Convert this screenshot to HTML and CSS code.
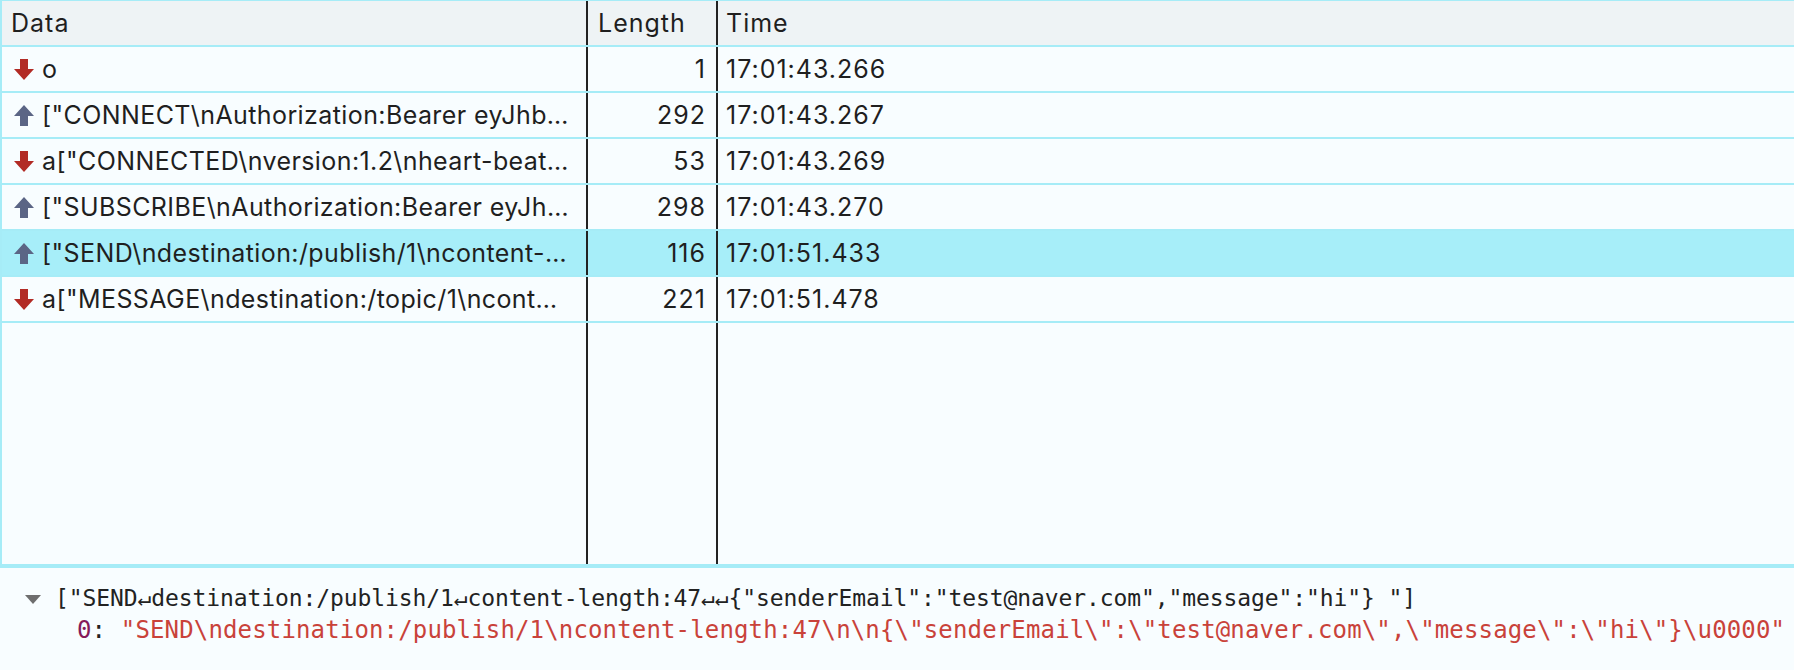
FILE: index.html
```html
<!DOCTYPE html>
<html>
<head>
<meta charset="utf-8">
<title>WebSocket frames</title>
<link rel="stylesheet" href="styles.css">
</head>
<body>
<div class="frames">
  <div class="row head">
    <div class="cell c-data">Data</div>
    <div class="cell c-len">Length</div>
    <div class="cell c-time">Time</div>
  </div>
  <div class="row">
    <div class="cell c-data"><svg class="arr recv" viewBox="0 0 20 21"><path d="M6 0H14V10H20L10 21L0 10H6Z"/></svg><span class="txt">o</span></div>
    <div class="cell c-len">1</div>
    <div class="cell c-time">17:01:43.266</div>
  </div>
  <div class="row">
    <div class="cell c-data"><svg class="arr sent" viewBox="0 0 20 21"><path d="M10 0L20 11H14V21H6V11H0Z"/></svg><span class="txt">["CONNECT\nAuthorization:Bearer eyJhb…</span></div>
    <div class="cell c-len">292</div>
    <div class="cell c-time">17:01:43.267</div>
  </div>
  <div class="row">
    <div class="cell c-data"><svg class="arr recv" viewBox="0 0 20 21"><path d="M6 0H14V10H20L10 21L0 10H6Z"/></svg><span class="txt">a["CONNECTED\nversion:1.2\nheart-beat…</span></div>
    <div class="cell c-len">53</div>
    <div class="cell c-time">17:01:43.269</div>
  </div>
  <div class="row">
    <div class="cell c-data"><svg class="arr sent" viewBox="0 0 20 21"><path d="M10 0L20 11H14V21H6V11H0Z"/></svg><span class="txt">["SUBSCRIBE\nAuthorization:Bearer eyJh…</span></div>
    <div class="cell c-len">298</div>
    <div class="cell c-time">17:01:43.270</div>
  </div>
  <div class="row selected">
    <div class="cell c-data"><svg class="arr sent" viewBox="0 0 20 21"><path d="M10 0L20 11H14V21H6V11H0Z"/></svg><span class="txt">["SEND\ndestination:/publish/1\ncontent-…</span></div>
    <div class="cell c-len">116</div>
    <div class="cell c-time">17:01:51.433</div>
  </div>
  <div class="row">
    <div class="cell c-data"><svg class="arr recv" viewBox="0 0 20 21"><path d="M6 0H14V10H20L10 21L0 10H6Z"/></svg><span class="txt">a["MESSAGE\ndestination:/topic/1\ncont…</span></div>
    <div class="cell c-len">221</div>
    <div class="cell c-time">17:01:51.478</div>
  </div>
  <div class="row filler">
    <div class="cell c-data"></div>
    <div class="cell c-len"></div>
    <div class="cell c-time"></div>
  </div>
</div>
<div class="detail">
  <div class="line1"><span class="tri"></span><span class="preview">["SEND↵destination:/publish/1↵content-length:47↵↵{"senderEmail":"test@naver.com","message":"hi"} "]</span></div>
  <div class="line2"><span class="idx">0</span>: <span class="str">"SEND\ndestination:/publish/1\ncontent-length:47\n\n{\"senderEmail\":\"test@naver.com\",\"message\":\"hi\"}\u0000"</span></div>
</div>
</body>
</html>
```

FILE: styles.css
```css
html, body {
  margin: 0;
  padding: 0;
}

body {
  width: 1794px;
  height: 670px;
  overflow: hidden;
  background: #f8fdff;
  font-family: Inter, "Liberation Sans", sans-serif;
  color: #1f1f1f;
}

.frames {
  box-sizing: border-box;
  height: 568px;
  display: flex;
  flex-direction: column;
  border-top: 1px solid #a6ecf7;
  border-left: 2px solid #a6ecf7;
  border-bottom: 4px solid #a6ecf7;
  background: #f8fdff;
}

.row {
  flex: none;
  box-sizing: border-box;
  height: 46px;
  display: flex;
  border-bottom: 2px solid #a6ecf7;
  font-size: 25px;
  letter-spacing: 1px;
}

.row.head {
  background: #eef3f5;
}

.row.selected {
  background: #a7eef9;
}

.row.filler {
  flex: 1;
  height: auto;
  border-bottom: none;
}

.cell {
  box-sizing: border-box;
  display: flex;
  align-items: center;
  white-space: nowrap;
  overflow: hidden;
}

.c-data {
  width: 586px;
  padding: 0 6px 0 9px;
  border-right: 2px solid #222;
}

.c-len {
  width: 130px;
  justify-content: flex-end;
  padding-right: 10px;
  border-right: 2px solid #222;
}

.head .c-len {
  justify-content: flex-start;
  padding-left: 10px;
}

.c-time {
  flex: 1;
  padding-left: 8px;
}

.arr {
  flex: none;
  width: 20px;
  height: 21px;
  margin: 0 8px 0 3px;
}

.arr.recv {
  fill: #b22b25;
}

.arr.sent {
  fill: #5b6585;
}

.txt {
  overflow: hidden;
  text-overflow: ellipsis;
  min-width: 0;
  letter-spacing: 0.4px;
}

.detail {
  padding-top: 14px;
  font-family: "DejaVu Sans Mono", "Liberation Mono", monospace;
  font-size: 24px;
  color: #222;
}

.line1, .line2 {
  height: 32px;
  line-height: 32px;
  white-space: pre;
  display: flex;
  align-items: center;
}

.line1 {
  padding-left: 25px;
}

.preview {
  font-size: 23px;
  letter-spacing: -0.1px;
}

.tri {
  width: 0;
  height: 0;
  border-left: 8px solid transparent;
  border-right: 8px solid transparent;
  border-top: 9px solid #6e6e6e;
  margin-right: 14px;
  margin-top: 2px;
}

.line2 {
  padding-left: 77px;
  letter-spacing: 0.15px;
}

.idx {
  color: #861a5a;
}

.str {
  color: #c9423a;
}
```
